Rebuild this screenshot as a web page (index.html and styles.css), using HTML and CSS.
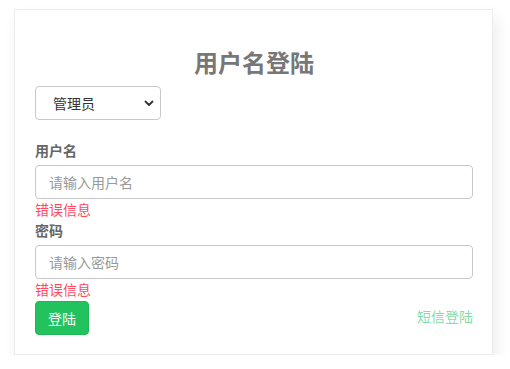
FILE: index.html
```html
<!DOCTYPE html>
<html lang="zh-CN">
<head>
    <meta charset="UTF-8">
    <meta name="viewport" content="width=device-width, initial-scale=1.0">
    <title>用户名登陆</title>
    <link rel="stylesheet" href="styles.css">
</head>
<body>
    <div class="login-card">
        <h3 class="login-title">用户名登陆</h3>

        <div class="role-select">
            <select>
                <option>管理员</option>
                <option>普通用户</option>
            </select>
            <svg class="chevron" width="10" height="7" viewBox="0 0 10 7">
                <path d="M1.5 1.5 L5 5 L8.5 1.5" fill="none" stroke="#333" stroke-width="1.8" stroke-linecap="round" stroke-linejoin="round"/>
            </svg>
        </div>

        <div class="field">
            <label class="field-label">用户名</label>
            <input class="field-input" type="text" placeholder="请输入用户名">
            <div class="field-error">错误信息</div>
        </div>

        <div class="field field-tight">
            <label class="field-label">密码</label>
            <input class="field-input" type="password" placeholder="请输入密码">
            <div class="field-error">错误信息</div>
        </div>

        <div class="actions">
            <button class="btn-login">登陆</button>
            <a href="#" class="sms-link">短信登陆</a>
        </div>
    </div>
</body>
</html>
```

FILE: styles.css
```css
body {
    margin: 0;
    padding: 9px 17px 0 14px;
    background: #fff;
    font-family: "Helvetica Neue", "Noto Sans CJK SC", sans-serif;
    font-size: 14px;
    line-height: 1.5;
    color: #333;
}
.login-card {
    width: 479px;
    box-sizing: border-box;
    padding: 38px 19px 19px 20px;
    border: 1px solid #ececec;
    background: #fff;
    box-shadow: 4px 8px 14px rgba(0, 0, 0, 0.07);
}
.login-title {
    margin: 0 0 9px;
    text-align: center;
    font-size: 24px;
    line-height: 1.2;
    font-weight: 700;
    color: #777;
}
.role-select {
    position: relative;
    width: 126px;
}
.role-select select {
    appearance: none;
    -webkit-appearance: none;
    width: 126px;
    height: 34px;
    padding: 0 0 0 17px;
    border: 1px solid #c8c8c8;
    border-radius: 4px;
    background: #fff;
    font-family: inherit;
    font-size: 14px;
    color: #333;
}
.chevron {
    position: absolute;
    right: 7px;
    top: 14px;
    pointer-events: none;
}
.field {
    display: flex;
    flex-direction: column;
    margin-top: 20px;
}
.field-tight {
    margin-top: 0;
}
.field-label {
    font-weight: 700;
    color: #666;
    margin-bottom: 4px;
}
.field-input {
    height: 34px;
    box-sizing: border-box;
    padding: 0 13px;
    border: 1px solid #c8c8c8;
    border-radius: 4px;
    font-family: inherit;
    font-size: 14px;
    outline: none;
}
.field-input::placeholder {
    color: #999;
}
.field-error {
    color: #ff4a5f;
}
.actions {
    display: flex;
    justify-content: space-between;
    align-items: center;
    margin-top: 1px;
}
.btn-login {
    width: 54px;
    height: 34px;
    padding: 0;
    border: 1px solid #1fb655;
    border-radius: 4px;
    background: #22c35e;
    color: #fff;
    font-family: inherit;
    font-size: 14px;
}
.sms-link {
    color: #86dca3;
    text-decoration: none;
    margin-top: -2px;
}
```
